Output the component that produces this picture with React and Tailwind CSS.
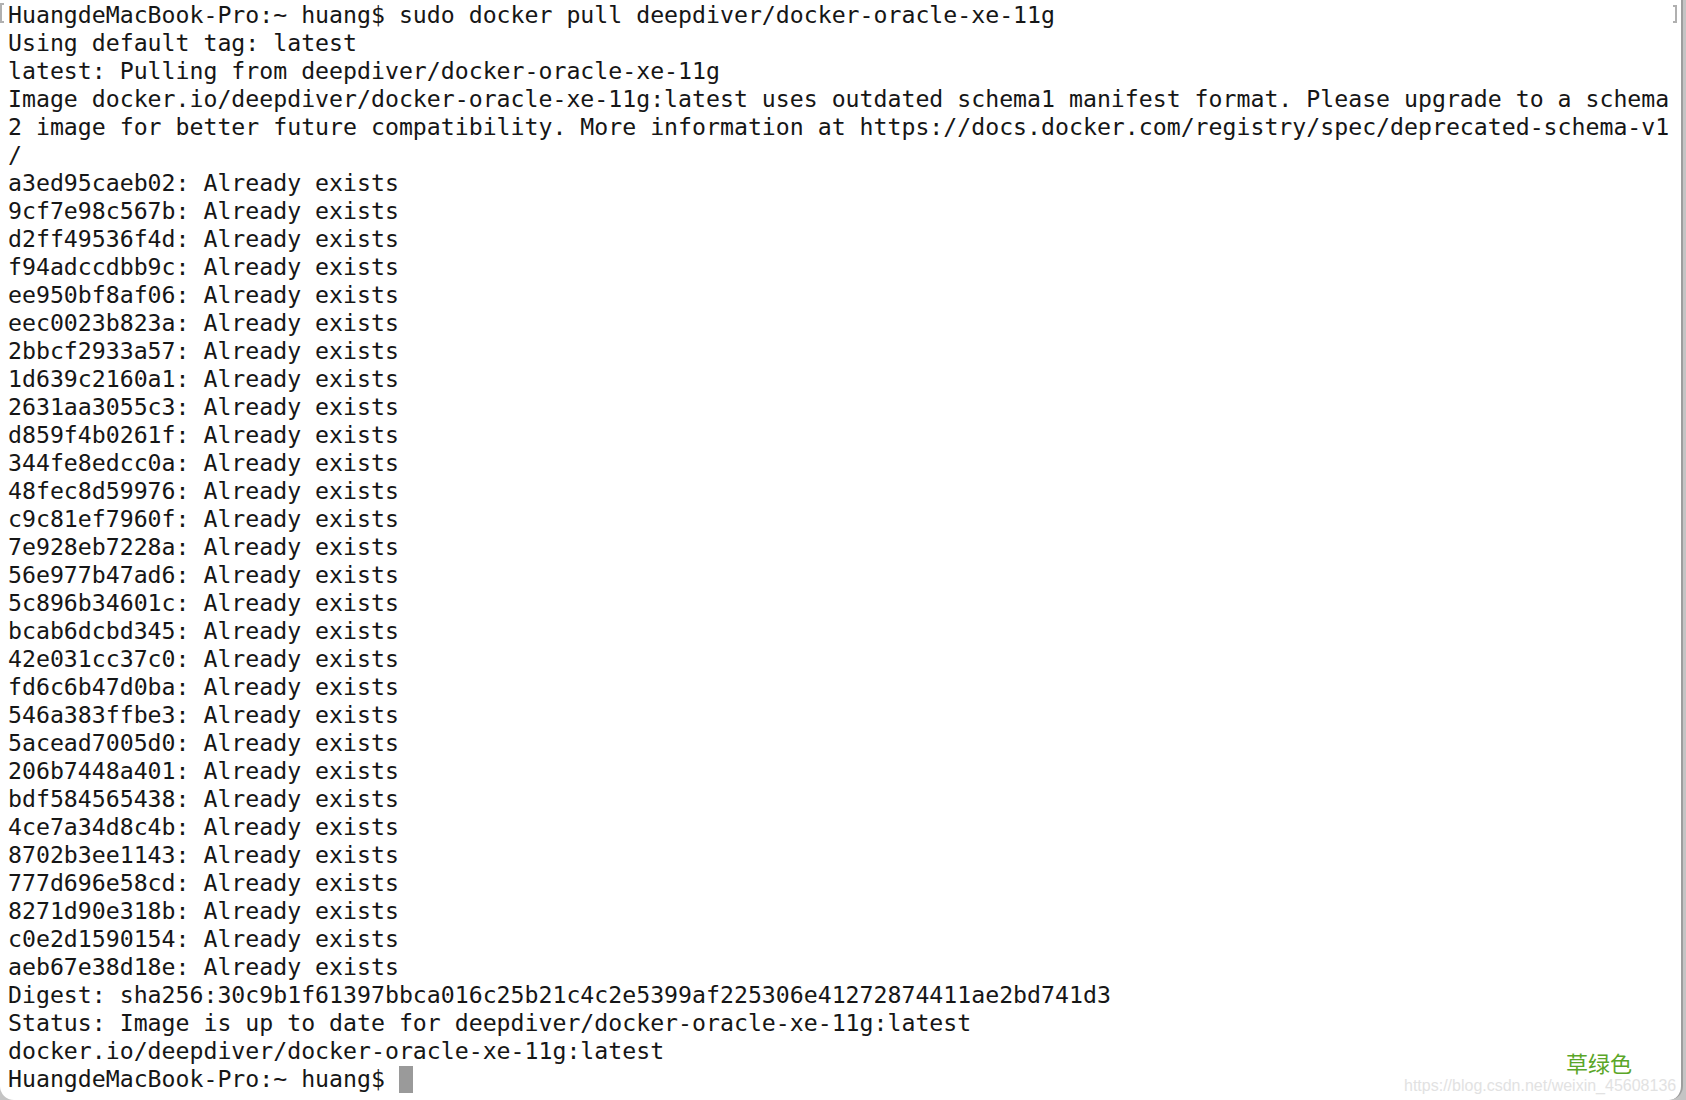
const ids = [
  "a3ed95caeb02",
  "9cf7e98c567b",
  "d2ff49536f4d",
  "f94adccdbb9c",
  "ee950bf8af06",
  "eec0023b823a",
  "2bbcf2933a57",
  "1d639c2160a1",
  "2631aa3055c3",
  "d859f4b0261f",
  "344fe8edcc0a",
  "48fec8d59976",
  "c9c81ef7960f",
  "7e928eb7228a",
  "56e977b47ad6",
  "5c896b34601c",
  "bcab6dcbd345",
  "42e031cc37c0",
  "fd6c6b47d0ba",
  "546a383ffbe3",
  "5acead7005d0",
  "206b7448a401",
  "bdf584565438",
  "4ce7a34d8c4b",
  "8702b3ee1143",
  "777d696e58cd",
  "8271d90e318b",
  "c0e2d1590154",
  "aeb67e38d18e",
];

const head = [
  "HuangdeMacBook-Pro:~ huang$ sudo docker pull deepdiver/docker-oracle-xe-11g",
  "Using default tag: latest",
  "latest: Pulling from deepdiver/docker-oracle-xe-11g",
  "Image docker.io/deepdiver/docker-oracle-xe-11g:latest uses outdated schema1 manifest format. Please upgrade to a schema",
  "2 image for better future compatibility. More information at https://docs.docker.com/registry/spec/deprecated-schema-v1",
  "/",
];

const tail = [
  "Digest: sha256:30c9b1f61397bbca016c25b21c4c2e5399af225306e41272874411ae2bd741d3",
  "Status: Image is up to date for deepdiver/docker-oracle-xe-11g:latest",
  "docker.io/deepdiver/docker-oracle-xe-11g:latest",
];

function Line({ children }) {
  return <div className="h-[28px] whitespace-pre">{children}</div>;
}

export default function App() {
  const lines = [...head, ...ids.map((id) => `${id}: Already exists`), ...tail];

  return (
    <div className="w-[1686px] h-[1100px] bg-[#c4c4c4] overflow-hidden">
      <div className="relative h-full mr-[3px] bg-white border-r-2 border-[#9d9d9d] rounded-b-[14px]">
        {/* bracket marks at the top corners */}
        <span className="absolute left-0 top-[3px] h-[20px] w-[4px] border-l-2 border-y-2 border-[#b0b0b0]" />
        <span className="absolute right-[4px] top-[5px] h-[18px] w-[4px] border-r-2 border-y-2 border-[#b0b0b0]" />

        <div
          className="pl-[8px] pt-px text-[23.2px] leading-[28px] text-[#161616]"
          style={{ fontFamily: '"DejaVu Sans Mono", "Liberation Mono", monospace' }}
        >
          {lines.map((l, i) => (
            <Line key={i}>{l}</Line>
          ))}
          <div className="h-[28px] whitespace-pre flex items-center">
            <span>HuangdeMacBook-Pro:~ huang$ </span>
            <span className="inline-block w-[14px] h-[27px] bg-[#9a9a9a]" />
          </div>
        </div>

        {/* csdn watermark */}
        <div className="absolute left-[1404px] top-[1048px] flex flex-col gap-[2px]">
          <span
            className="pl-[162px] text-[22px] leading-[28px] text-[#5aa628]"
            style={{ fontFamily: '"Noto Sans CJK SC", sans-serif' }}
          >
            草绿色
          </span>
          <span
            className="text-[16px] leading-[16px] text-[#e2e2e2]"
            style={{ fontFamily: '"Liberation Sans", Arial, sans-serif' }}
          >
            https://blog.csdn.net/weixin_45608136
          </span>
        </div>
      </div>
    </div>
  );
}
